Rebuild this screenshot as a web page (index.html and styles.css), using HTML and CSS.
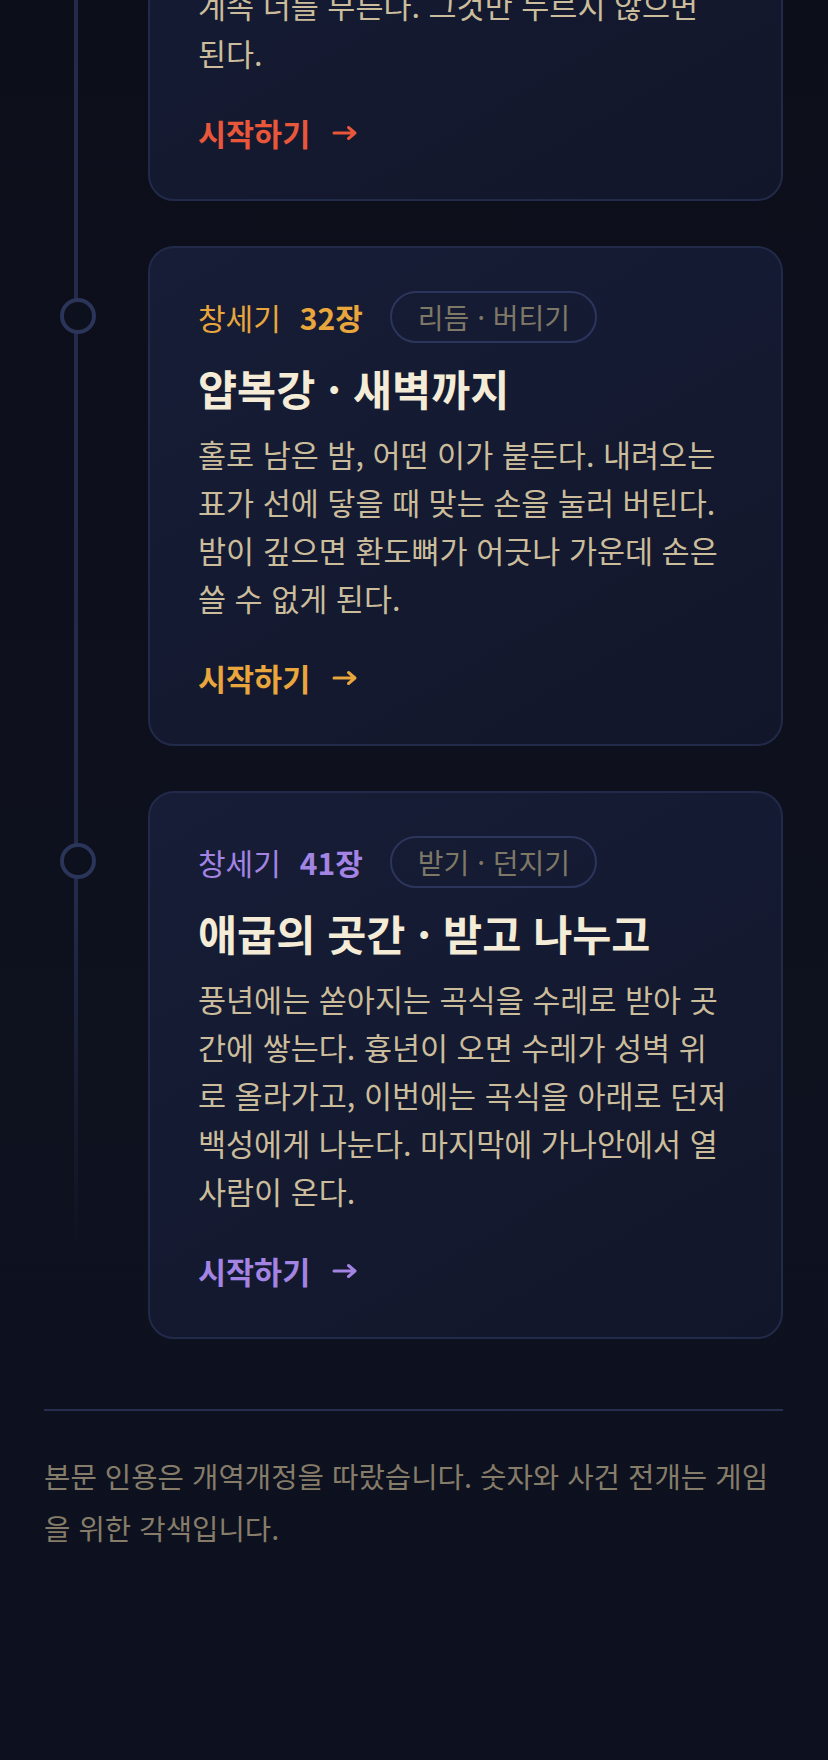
FILE: index.html
```html
<!DOCTYPE html>
<html lang="ko">
<head>
<meta charset="utf-8">
<title>창세기 — 장면 목록</title>
<link rel="stylesheet" href="styles.css">
</head>
<body>
<div class="page">
  <ol class="timeline">
    <li class="entry entry--red">
      <span class="dot"></span>
      <article class="card">
        <div class="meta">
          <span class="book">창세기</span>
          <span class="chapter">28장</span>
          <span class="tag">누르기 · 참기</span>
        </div>
        <h2 class="title">벧엘 · 사닥다리</h2>
        <p class="text">돌베개를 베고 잠든 밤, 사닥다리 위로 천사들이 오르내린다. 꿈속의 목소리가<br>계속 너를 부른다. 그것만 누르지 않으면 된다.</p>
        <a class="start" href="#">시작하기 <svg class="arrow" viewBox="0 0 26 16" aria-hidden="true"><path d="M2 8h21M16.5 2.5L23 8l-6.5 5.5"/></svg></a>
      </article>
    </li>
    <li class="entry entry--amber">
      <span class="dot"></span>
      <article class="card">
        <div class="meta">
          <span class="book">창세기</span>
          <span class="chapter">32장</span>
          <span class="tag">리듬 · 버티기</span>
        </div>
        <h2 class="title">얍복강 · 새벽까지</h2>
        <p class="text">홀로 남은 밤, 어떤 이가 붙든다. 내려오는 표가 선에 닿을 때 맞는 손을 눌러 버틴다. 밤이 깊으면 환도뼈가 어긋나 가운데 손은 쓸 수 없게 된다.</p>
        <a class="start" href="#">시작하기 <svg class="arrow" viewBox="0 0 26 16" aria-hidden="true"><path d="M2 8h21M16.5 2.5L23 8l-6.5 5.5"/></svg></a>
      </article>
    </li>
    <li class="entry entry--violet">
      <span class="dot"></span>
      <article class="card">
        <div class="meta">
          <span class="book">창세기</span>
          <span class="chapter">41장</span>
          <span class="tag">받기 · 던지기</span>
        </div>
        <h2 class="title">애굽의 곳간 · 받고 나누고</h2>
        <p class="text">풍년에는 쏟아지는 곡식을 수레로 받아 곳간에 쌓는다. 흉년이 오면 수레가 성벽 위로 올라가고, 이번에는 곡식을 아래로 던져 백성에게 나눈다. 마지막에 가나안에서 열 사람이 온다.</p>
        <a class="start" href="#">시작하기 <svg class="arrow" viewBox="0 0 26 16" aria-hidden="true"><path d="M2 8h21M16.5 2.5L23 8l-6.5 5.5"/></svg></a>
      </article>
    </li>
  </ol>
  <footer class="note">
    <p>본문 인용은 개역개정을 따랐습니다. 숫자와 사건 전개는 게임을 위한 각색입니다.</p>
  </footer>
</div>
</body>
</html>
```

FILE: styles.css
```css
html, body {
  margin: 0;
  padding: 0;
  background: #0d101d;
}

body {
  font-family: "Noto Sans CJK KR", "Noto Sans", sans-serif;
  color: #cbbd9b;
}

.page {
  box-sizing: border-box;
  height: 1760px;
  overflow: hidden;
  display: flex;
  flex-direction: column;
  justify-content: flex-end;
  padding: 0 45px 206px 44px;
  background: linear-gradient(180deg, #0c0e1a 0%, #0e111e 60%, #0d101e 100%);
}

.timeline {
  flex-shrink: 0;
  list-style: none;
  margin: 0;
  padding: 0;
  position: relative;
  display: flex;
  flex-direction: column;
  gap: 45px;
}

.timeline::before {
  content: "";
  position: absolute;
  left: 30px;
  top: 0;
  bottom: 0;
  width: 4px;
  background: linear-gradient(180deg, #242b4a 0, #242b4a calc(100% - 450px), rgba(36, 43, 74, 0) calc(100% - 80px));
}

.entry {
  display: grid;
  grid-template-columns: 104px 1fr;
  align-items: start;
}

.dot {
  position: relative;
  z-index: 1;
  box-sizing: border-box;
  width: 36px;
  height: 36px;
  margin: 52px 0 0 16px;
  border: 4px solid #2b3459;
  border-radius: 50%;
  background: #0d101d;
}

.card {
  border: 2px solid #222a49;
  border-radius: 26px;
  padding: 43px 48px 48px;
  background: linear-gradient(150deg, #171d36 0%, #141a31 45%, #12162a 100%);
}

.meta {
  display: flex;
  align-items: center;
  height: 52px;
  font-size: 30px;
}

.book {
  font-weight: 400;
  margin-right: 19px;
}

.chapter {
  font-weight: 700;
  margin-right: 27px;
}

.tag {
  box-sizing: border-box;
  height: 52px;
  display: flex;
  align-items: center;
  padding: 0 25px 0 26px;
  border: 2px solid #2c355c;
  border-radius: 999px;
  color: #7e7967;
  font-size: 28px;
}

.title {
  margin: 20px 0 17px;
  font-size: 42.5px;
  line-height: 50px;
  font-weight: 700;
  color: #f4ecd6;
}

.text {
  margin: 0;
  font-size: 30.5px;
  line-height: 48px;
  color: #cbbd9b;
}

.start {
  margin-top: 38px;
  height: 36px;
  display: flex;
  align-items: center;
  gap: 22px;
  font-size: 30.5px;
  font-weight: 700;
  text-decoration: none;
}

.arrow {
  width: 26px;
  height: 16px;
  fill: none;
  stroke: currentColor;
  stroke-width: 3;
  stroke-linecap: round;
  stroke-linejoin: round;
}

.entry--red .book,
.entry--red .chapter,
.entry--red .start { color: #e9573b; }

.entry--amber .book,
.entry--amber .chapter,
.entry--amber .start { color: #e8a63c; }

.entry--violet .book,
.entry--violet .chapter,
.entry--violet .start { color: #a384e2; }

.note {
  flex-shrink: 0;
  margin-top: 70px;
  padding-top: 39px;
  border-top: 2px solid #262d4e;
}

.note p {
  margin: 0;
  font-size: 28.7px;
  line-height: 52px;
  color: #857d69;
}
```
